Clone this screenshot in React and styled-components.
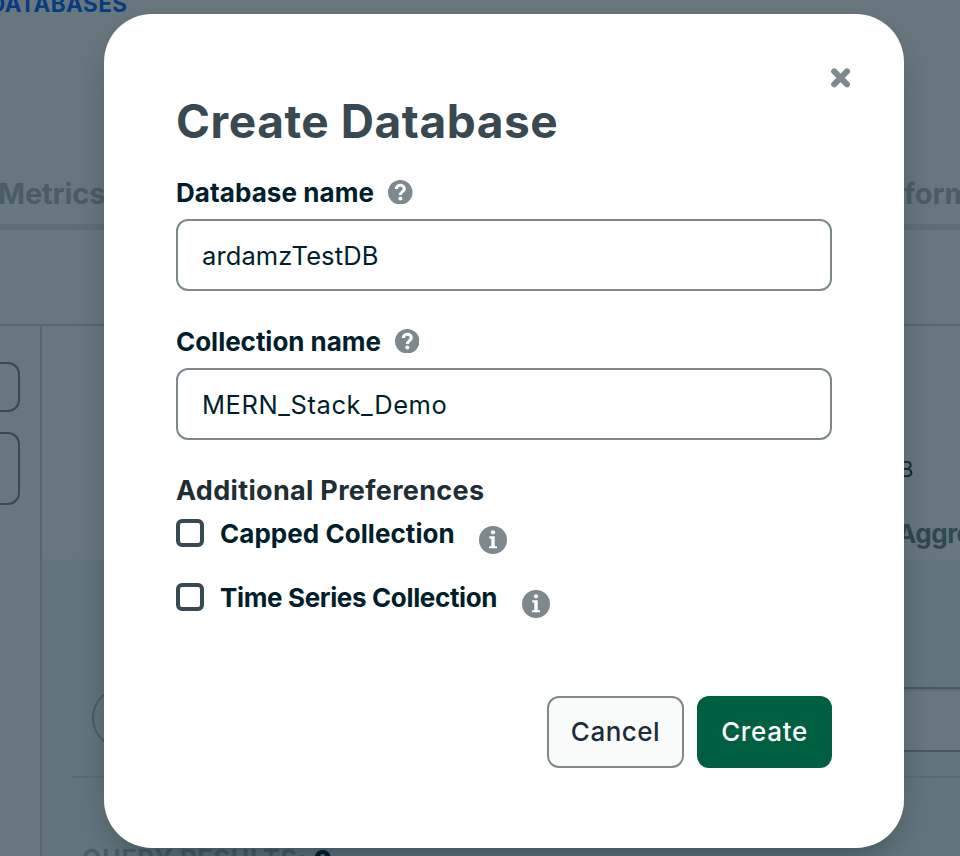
import React from "react";
import styled, { createGlobalStyle } from "styled-components";

const GlobalStyle = createGlobalStyle`
  * { box-sizing: border-box; }
  body { margin: 0; font-family: Inter, "Liberation Sans", sans-serif; overflow: hidden; }
  h1, h2, p { margin: 0; }
`;

const Page = styled.div`
  display: flex;
  flex-direction: column;
  width: 960px;
  height: 856px;
  overflow: hidden;
  background: #68777e;
`;

const Breadcrumb = styled.div`
  height: 164px;
  margin-left: -11px;
  margin-top: -8px;
  font-size: 22.5px;
  line-height: 24px;
  font-weight: 700;
  letter-spacing: 0.45px;
  color: #083b80;
`;

const TabBar = styled.nav`
  display: flex;
  justify-content: space-between;
  height: 74px;
  padding-top: 21px;
  border-bottom: 6px solid #5d6e74;
`;

const Tab = styled.span`
  width: ${(p) => p.$width || "auto"};
  margin-left: ${(p) => p.$shift || 0}px;
  font-size: 29px;
  line-height: 34px;
  font-weight: 700;
  letter-spacing: -0.1px;
  white-space: nowrap;
  color: #4a5d63;
`;

const SubHeader = styled.div`
  height: 96px;
  border-bottom: 2px solid #56676d;
`;

const Columns = styled.div`
  display: flex;
  flex: 1;
  min-height: 0;
`;

const Sidebar = styled.aside`
  display: flex;
  flex-direction: column;
  gap: 20px;
  width: 42px;
  padding-top: 36px;
  border-right: 2px solid #56676d;
`;

const SideField = styled.div`
  width: 20px;
  height: ${(p) => p.$height}px;
  border: 2px solid #354b53;
  border-left: 0;
  border-radius: 0 12px 12px 0;
`;

const Content = styled.main`
  display: flex;
  flex-direction: column;
  flex: 1;
  min-width: 0;
`;

const Summary = styled.div`
  flex: none;
  height: 233px;
  padding-top: 130px;
`;

const SizeText = styled.p`
  margin-left: 857px;
  font-size: 22px;
  line-height: 26px;
  color: #14272f;
`;

const ContentTab = styled.p`
  margin: 35px 0 0 855px;
  font-size: 26px;
  line-height: 34px;
  font-weight: 700;
  letter-spacing: -0.5px;
  color: #304850;
`;

const Results = styled.section`
  display: flex;
  flex-direction: column;
  flex: 1;
  padding-top: 128px;
  background: #63757b;
`;

const Filter = styled.div`
  display: flex;
  flex: none;
  height: 65px;
  justify-content: space-between;
`;

const FilterButton = styled.div`
  width: 120px;
  height: 62px;
  margin-left: 50px;
  border: 2px solid #4b5e64;
  border-radius: 31px;
`;

const FilterField = styled.div`
  width: 100px;
  border: 2px solid #46595f;
  border-width: 2px 0;
  background: #68777e;
  box-shadow: inset 0 2px 0 #5e6f75;
`;

const Rule = styled.div`
  flex: none;
  height: 26px;
  margin-left: 30px;
  border-bottom: 2px solid #5a6c72;
`;

const ResultCount = styled.p`
  margin: 66px 0 0 40px;
  font-size: 25px;
  line-height: 30px;
  font-weight: 700;
  letter-spacing: 0.9px;
  white-space: nowrap;
  color: #4a5e65;
  b { color: #001e2b; }
`;

const Modal = styled.div`
  position: absolute;
  left: 104px;
  top: 14px;
  display: flex;
  flex-direction: column;
  width: 800px;
  height: 834px;
  padding: 50px 72px 80px;
  border-radius: 48px;
  background: #fff;
  box-shadow: 0 16px 40px -16px rgba(0, 30, 43, 0.6);
`;

const CloseButton = styled.button`
  display: flex;
  align-self: flex-end;
  margin-right: -23px;
  padding: 0;
  border: 0;
  background: none;
`;

const Title = styled.h1`
  margin-top: 1px;
  font-size: 46px;
  line-height: 56px;
  font-weight: 700;
  letter-spacing: ${(p) => p.$spacing}px;
  color: #394951;
`;

const Field = styled.div`
  display: flex;
  flex-direction: column;
  gap: 9px;
  margin-top: ${(p) => p.$top}px;
`;

const LabelRow = styled.div`
  display: flex;
  align-items: center;
  gap: 14px;
  height: 36px;
`;

const Label = styled.label`
  padding-top: 1px;
  font-size: 26px;
  line-height: 35px;
  font-weight: 700;
  white-space: nowrap;
  letter-spacing: ${(p) => p.$spacing || 0}px;
  color: #001e2b;
`;

const Input = styled.input`
  width: 656px;
  height: 72px;
  padding: 1px 24px 0;
  border: 2px solid #7d898d;
  border-radius: 12px;
  outline: 0;
  background: #fff;
  font: 400 25.5px Inter, "Liberation Sans", sans-serif;
  letter-spacing: ${(p) => p.$spacing}px;
  color: #001e2b;
`;

const SectionTitle = styled.h2`
  margin-top: 33px;
  font-size: 27px;
  line-height: 36px;
  font-weight: 700;
  letter-spacing: ${(p) => p.$spacing}px;
  color: #1f2d35;
`;

const Option = styled.div`
  display: flex;
  align-items: center;
  height: 36px;
  margin-top: ${(p) => p.$top}px;
`;

const Checkbox = styled.span`
  width: 28px;
  height: 28px;
  margin-right: 16px;
  border: 4px solid #394951;
  border-radius: 6px;
`;

const InfoSlot = styled.span`
  display: flex;
  margin: 14px 0 0 24.5px;
`;

const Actions = styled.div`
  display: flex;
  justify-content: flex-end;
  gap: 13px;
  margin-top: auto;
`;

const Button = styled.button`
  width: ${(p) => (p.$primary ? 135 : 137)}px;
  height: 72px;
  padding: 0 0 1px;
  border: 2px solid ${(p) => (p.$primary ? "#005e41" : "#7d898d")};
  border-radius: 12px;
  background: ${(p) => (p.$primary ? "#005e41" : "#f9fafa")};
  color: ${(p) => (p.$primary ? "#fff" : "#1c2d38")};
  font: 500 26px Inter, "Liberation Sans", sans-serif;
  letter-spacing: ${(p) => p.$spacing}px;
`;

const HelpIcon = () => (
  <svg width="24.5" height="24.5" viewBox="0 0 24 24" fill="none">
    <circle cx="12" cy="12" r="12" fill="#7d898d" />
    <path d="M8.2 8.7C8.2 3.9 16 4.1 16 8.5C16 11.4 12.1 11.4 12.1 14.7" stroke="#fff" strokeWidth="3" />
    <circle cx="12.1" cy="18.2" r="2" fill="#fff" />
  </svg>
);

const InfoIcon = () => (
  <svg width="28" height="28" viewBox="0 0 28 28" fill="#fff">
    <circle cx="14" cy="14" r="14" fill="#7d898d" />
    <circle cx="14" cy="6.3" r="2.1" />
    <path d="M10.3 10.3H15.7V20.2H18V22.3H10.1V20.2H12.3V12.4H10.3Z" />
  </svg>
);

export default function App() {
  return (
    <>
      <GlobalStyle />
      <Page>
        <Breadcrumb>DATABASES</Breadcrumb>
        <TabBar>
          <Tab $shift={-2}>Metrics</Tab>
          <Tab $width="56px">form</Tab>
        </TabBar>
        <SubHeader />
        <Columns>
          <Sidebar>
            <SideField $height={50} />
            <SideField $height={73} />
          </Sidebar>
          <Content>
            <Summary>
              <SizeText>B</SizeText>
              <ContentTab>Aggre</ContentTab>
            </Summary>
            <Results>
              <Filter>
                <FilterButton />
                <FilterField />
              </Filter>
              <Rule />
              <ResultCount>QUERY RESULTS: <b>0</b></ResultCount>
            </Results>
          </Content>
        </Columns>
      </Page>
      <Modal role="dialog">
        <CloseButton aria-label="Close">
          <svg width="28" height="28" viewBox="0 0 28 28" stroke="#7d898d" strokeWidth="6" strokeLinecap="round">
            <path d="M7.2 7.4L20 20.4M20 7.4L7.2 20.4" />
          </svg>
        </CloseButton>
        <Title $spacing={0.55}>Create Database</Title>
        <Field $top={25}>
          <LabelRow><Label $spacing={0.08}>Database name</Label><HelpIcon /></LabelRow>
          <Input $spacing={0.1} defaultValue="ardamzTestDB" />
        </Field>
        <Field $top={32}>
          <LabelRow><Label $spacing={-0.03}>Collection name</Label><HelpIcon /></LabelRow>
          <Input $spacing={0.58} defaultValue="MERN_Stack_Demo" />
        </Field>
        <SectionTitle $spacing={0.32}>Additional Preferences</SectionTitle>
        <Option $top={6}>
          <Checkbox /><Label $spacing={0.05}>Capped Collection</Label>
          <InfoSlot><InfoIcon /></InfoSlot>
        </Option>
        <Option $top={28}>
          <Checkbox /><Label $spacing={-0.36}>Time Series Collection</Label>
          <InfoSlot><InfoIcon /></InfoSlot>
        </Option>
        <Actions>
          <Button $spacing={0.5}>Cancel</Button>
          <Button $primary $spacing={0.65}>Create</Button>
        </Actions>
      </Modal>
    </>
  );
}
